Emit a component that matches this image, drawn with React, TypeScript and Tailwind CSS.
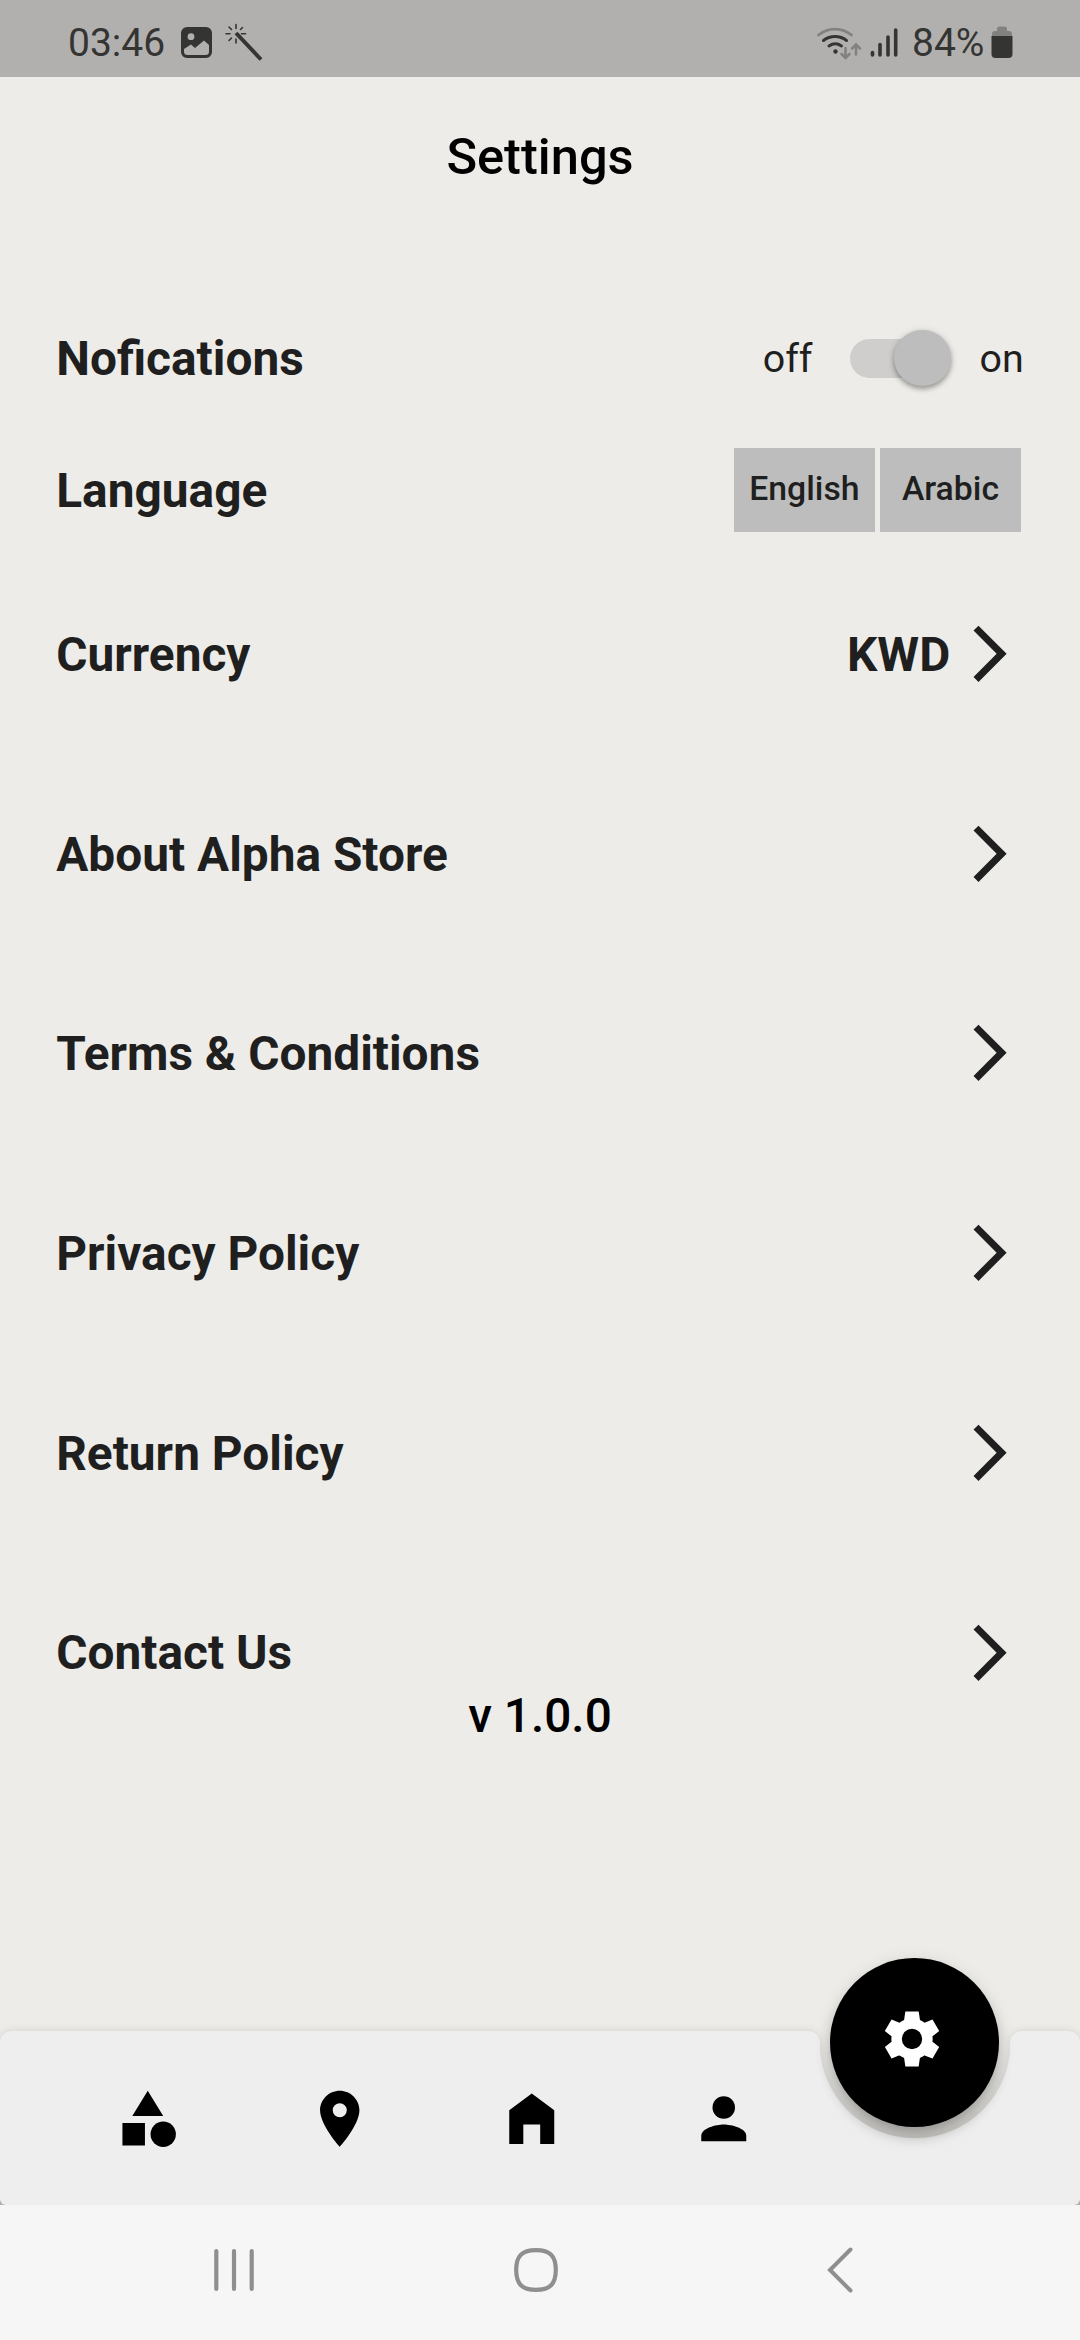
import type { ReactNode } from 'react';

function Icon({ children, className = '' }: { children: ReactNode; className?: string }) {
  return (
    <svg viewBox="0 0 24 24" fill="currentColor" className={`size-[67.5px] shrink-0 ${className}`}>
      {children}
    </svg>
  );
}

function StatusBar() {
  return (
    <header className="flex h-[77px] shrink-0 items-start bg-[#b1b0ae] text-[39px] leading-[46px] text-[#343432]">
      <span className="mt-[20px] ml-[68px] w-[98px]">03:46</span>
      <svg viewBox="0 0 31 31" className="mt-[27px] ml-[15px] size-[31px]">
        <path
          fillRule="evenodd"
          fill="currentColor"
          d="M6 0h19a6 6 0 0 1 6 6v19a6 6 0 0 1-6 6H6a6 6 0 0 1-6-6V6a6 6 0 0 1 6-6zM10 6.300a3.400 3.400 0 1 0 0 6.800a3.400 3.400 0 0 0 0-6.800zM3 22v2.500Q3 28 6.500 28h18Q28 28 28 24.500V18l-5-4.500L14 21l-4-3.500z"
        />
      </svg>
      <svg viewBox="0 0 40 40" className="mt-[22px] ml-[12px] size-[40px]" fill="none" stroke="currentColor" strokeLinecap="round">
        <path d="M12 11 L37 37.500" strokeWidth="4" strokeLinecap="butt" />
        <path d="M12 2.500v4M12 17v4M2 11.700h4M17.500 11.700h4M5 5l2.500 2.500M18.500 5.500l-2 2M5 18.500l2.500-2.500" strokeWidth="1.600" />
      </svg>
      <svg viewBox="0 0 48 36" className="mt-[24px] ml-[551px] h-[36px] w-[48px]" fill="none" strokeLinecap="round">
        <g stroke="#82817f" strokeWidth="2.800">
          <path d="M3.500 11a26 26 0 0 1 33 0" />
          <path d="M30.500 24v9.500M26.500 30l4 4 4-4M41 30.500V22M37 24.500l4-4 4 4" strokeWidth="2.500" />
        </g>
        <g stroke="currentColor" strokeWidth="3">
          <path d="M8.500 16.500a19 19 0 0 1 23 0" />
          <path d="M14 22a11 11 0 0 1 12.500 0" />
        </g>
        <circle cx="20.500" cy="27.500" r="2.200" fill="currentColor" />
      </svg>
      <svg viewBox="0 0 30 32" className="mt-[27px] ml-[5px] h-[32px] w-[30px]" stroke="currentColor" strokeWidth="3.600" strokeLinecap="round">
        <path d="M4.500 25.500v2.500M12 17.500v10.500M20 10v18M27.700 3v25" />
      </svg>
      <span className="mt-[20px] ml-[14px] w-[74px]">84%</span>
      <svg viewBox="0 0 22 32" className="mt-[26px] ml-[5px] h-[32px] w-[22px]">
        <path fill="#82817f" d="M6 5V3q0-2.500 2.500-2.500h5Q16 .5 16 3v2h2q3 0 3 3v4H1V8q0-3 3-3z" />
        <path fill="currentColor" d="M.5 10h21v18q0 4-4 4h-13q-4 0-4-4z" />
      </svg>
    </header>
  );
}

function Chevron() {
  return (
    <Icon>
      <path d="M6.230 20.230 8 22l10-10L8 2 6.230 3.770 14.460 12z" />
    </Icon>
  );
}

function LinkRow({ label, value }: { label: string; value?: string }) {
  return (
    <button className="flex h-[199.690px] w-full items-center text-left">
      <span className="flex-1 pt-[4px]">{label}</span>
      {value && <span className="mr-[6px] pt-[4px]">{value}</span>}
      <Chevron />
    </button>
  );
}

const links = ['About Alpha Store', 'Terms & Conditions', 'Privacy Policy', 'Return Policy', 'Contact Us'];

function BottomBar() {
  return (
    <div className="relative h-[174px] shrink-0">
      <div className="absolute inset-x-0 bottom-0 flex h-[6px] justify-between">
        <i className="w-[6px] bg-[#b3b3b3]" />
        <i className="w-[6px] bg-[#b3b3b3]" />
      </div>
      <div className="absolute inset-0 flex overflow-visible drop-shadow-[0_0_4px_rgba(0,0,0,0.11)]">
        <div className="w-[820px] rounded-t-[12px] rounded-bl-[6px] bg-[#eeeeee]" />
        <div className="w-[190px] bg-[radial-gradient(circle_at_95px_12px,transparent_95px,#eeeeee_95.800px)]" />
        <div className="flex-1 rounded-t-[12px] rounded-br-[6px] bg-[#eeeeee]" />
      </div>
      <div className="absolute top-[12px] left-[820px] h-[95px] w-[190px] rounded-b-full bg-linear-to-b from-black/0 to-black/8" />
      <nav className="relative flex h-full items-center pt-[1px] pl-[51.300px] text-black">
        <div className="flex w-[192px] justify-center">
          <Icon>
            <path d="M12 2 6.500 11h11zM3 13.500h8v8H3z" />
            <circle cx="17.500" cy="17.500" r="4.500" />
          </Icon>
        </div>
        <div className="flex w-[192px] justify-center">
          <Icon>
            <path d="M12 2C8.130 2 5 5.130 5 9c0 5.250 7 13 7 13s7-7.750 7-13c0-3.870-3.130-7-7-7zm0 9.500a2.500 2.500 0 0 1 0-5 2.500 2.500 0 0 1 0 5z" />
          </Icon>
        </div>
        <div className="flex w-[192px] justify-center">
          <Icon>
            <path d="M4 21V9l8-6 8 6v12h-5v-7H9v7z" />
          </Icon>
        </div>
        <div className="flex w-[192px] justify-center">
          <Icon>
            <circle cx="12" cy="8" r="4" />
            <path d="M12 14c-2.670 0-8 1.340-8 4v2h16v-2c0-2.660-5.330-4-8-4z" />
          </Icon>
        </div>
      </nav>
      <button className="absolute top-[-73px] left-[830.400px] flex size-[168.700px] items-center justify-center rounded-full bg-black pr-[6px] pb-[6px] text-white shadow-[0_11px_16px_-3px_rgba(0,0,0,0.28),0_3px_18px_rgba(0,0,0,0.10)]">
        <svg viewBox="0 0 24 24" fill="currentColor" className="size-[66px]">
          <path
            fillRule="evenodd"
            d="M19.440 12.990l-.01.02c.04-.33.08-.67.08-1.010 0-.34-.03-.66-.07-.99l.01.02 2.440-1.920-2.430-4.220-2.870 1.160.01.01c-.52-.4-1.090-.74-1.710-1h.01L14.440 2H9.570l-.44 3.070h.01c-.62.26-1.190.6-1.710 1l.01-.01-2.880-1.170-2.440 4.220 2.440 1.920.01-.02c-.04.33-.07.65-.07.99 0 .34.03.68.08 1.010l-.01-.02-2.100 1.650-.33.26 2.430 4.200 2.880-1.150-.02-.04c.53.41 1.100.75 1.730 1.010h-.03L9.580 22h4.850s.03-.18.06-.42l.38-2.650h-.01c.62-.26 1.200-.6 1.730-1.010l-.02.04 2.880 1.150 2.430-4.200s-.14-.12-.33-.26l-2.110-1.660zM12 15.700a3.700 3.700 0 1 1 0-7.400 3.700 3.700 0 0 1 0 7.400z"
          />
        </svg>
      </button>
    </div>
  );
}

function SystemNav() {
  return (
    <footer className="relative flex h-[135px] shrink-0 items-center bg-[#f6f6f6] pb-[5px] text-[#8f8f8f]">
      <svg viewBox="0 0 42 46" className="ml-[213px] h-[46px] w-[42px]" stroke="currentColor" strokeWidth="4.200" strokeLinecap="round">
        <path d="M3.300 4v38M21 4v38M38.700 4v38" />
      </svg>
      <svg viewBox="0 0 46 46" className="ml-[258px] size-[46px]" fill="none" stroke="currentColor" strokeWidth="4.200">
        <path d="M23 3.200C37 3.200 42.800 9 42.800 23S37 42.800 23 42.800 3.200 37 3.200 23 9 3.200 23 3.200z" />
      </svg>
      <svg viewBox="0 0 28 46" className="ml-[267px] h-[46px] w-[28px]" fill="none" stroke="currentColor" strokeWidth="4" strokeLinecap="round">
        <path d="M24.500 2.500 4 23l20.500 20.500" />
      </svg>
    </footer>
  );
}

export default function App() {
  return (
    <div className="flex h-[2340px] w-[1080px] flex-col overflow-hidden bg-[#edece8] font-[Roboto,sans-serif] text-[#1f1f1f]">
      <StatusBar />
      <h1 className="flex h-[158px] shrink-0 items-center justify-center pt-[2px] text-[50.600px] font-medium text-black">Settings</h1>
      <main className="flex flex-1 flex-col px-[56.250px] text-[47.800px] font-bold">
        <section className="mt-[57px] flex h-[132px] items-center">
          <span className="flex-1 pt-[4px]">Nofications</span>
          <span className="pt-[2px] text-[39.400px] font-normal">off</span>
          <span className="relative mx-[27px] flex h-[56px] w-[113px] items-center px-[10px]">
            <span className="h-[39px] w-[93px] rounded-full bg-[#cfcecc]" />
            <span className="absolute right-[2px] size-[56.250px] rounded-full bg-[#bdbdbd] shadow-[0_3px_5px_rgba(0,0,0,0.3),0_1px_8px_rgba(0,0,0,0.12)]" />
          </span>
          <span className="pt-[2px] text-[39.400px] font-normal">on</span>
        </section>
        <section className="flex h-[132px] items-center">
          <span className="flex-1 pt-[4px]">Language</span>
          <div className="mr-[3px] flex gap-[5.500px] text-[33.750px] font-medium">
            <button className="h-[84px] w-[140.600px] bg-[#bdbdbd] pb-[1px]">English</button>
            <button className="h-[84px] w-[140.600px] bg-[#bdbdbd] pb-[1px]">Arabic</button>
          </div>
        </section>
        <section className="-mt-[2px]">
          <LinkRow label="Currency" value="KWD" />
          {links.map((label) => (
            <LinkRow key={label} label={label} />
          ))}
        </section>
        <p className="-mt-[71px] text-center font-medium text-black">v 1.0.0</p>
      </main>
      <BottomBar />
      <SystemNav />
    </div>
  );
}
